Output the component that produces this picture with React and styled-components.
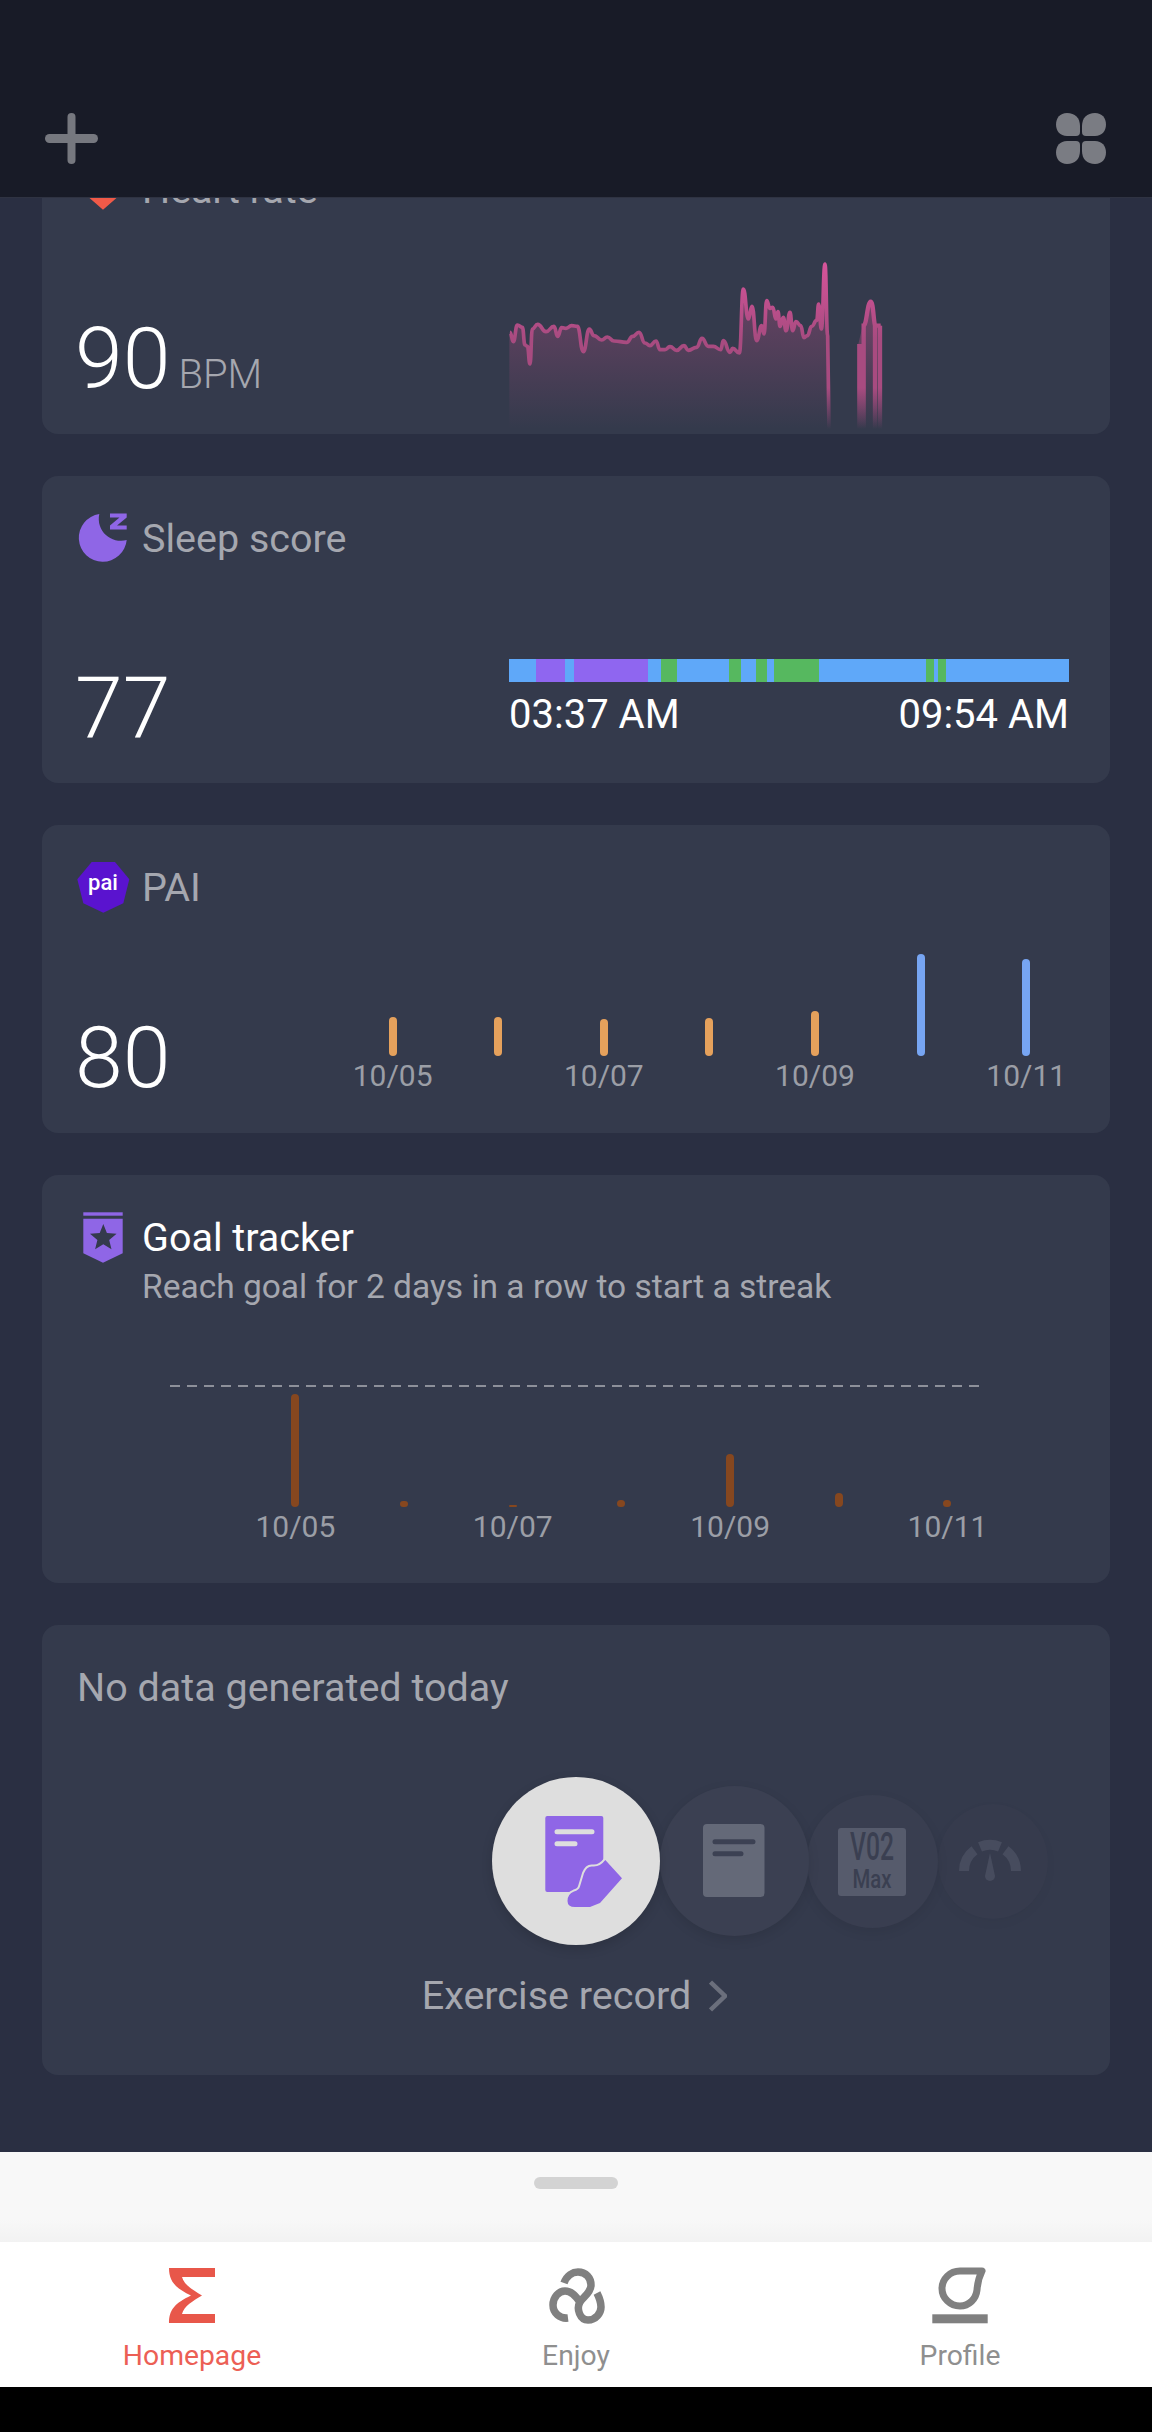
import React from 'react';
import styled, { createGlobalStyle } from 'styled-components';

const Global = createGlobalStyle`
  html, body { margin: 0; padding: 0; background: #000; }
  * { box-sizing: border-box; }
  body { font-family: Roboto, "Noto Sans", sans-serif; }
`;

const Page = styled.div`
  width: 1152px; height: 2432px; display: flex; flex-direction: column; overflow: hidden;
  background: #2a2f42;
`;
const Header = styled.header`
  flex: none; height: 198px; background: #181b27; padding: 113px 45px 0;
  display: flex; justify-content: space-between; align-items: flex-start;
  border-bottom: 1px solid #2f3342;
`;
const HeaderIcon = styled.svg`width: 53px; height: 51px; display: block;`;
const Scroller = styled.main`flex: none; height: 1954px; overflow: hidden; padding: 0 42px;`;
const Feed = styled.div`margin-top: -71px; display: flex; flex-direction: column; gap: 42px;`;
const Card = styled.section`
  height: ${p => p.$h}px; background: #343a4c; border-radius: 16px; overflow: hidden;
  padding: 37px 41px 0 35px; display: flex; flex-direction: column;
`;
const TitleRow = styled.div`display: flex; align-items: center; gap: 13px; height: 52px; flex: none;`;
const IconSlot = styled.svg`width: 52px; height: 52px; flex: none; overflow: visible; display: block;`;
const Title = styled.div`
  font-size: 39.5px; line-height: 50px; color: ${p => (p.$strong ? '#fff' : '#a5a7af')}; white-space: nowrap;
`;
const Body = styled.div`flex: 1; display: flex; justify-content: space-between; align-items: flex-end;`;
const ValueWrap = styled.div`display: flex; align-items: baseline; gap: 8px; margin: 0 0 33px -2px;`;
const Value = styled.div`font-size: 86px; line-height: 84px; color: #fff; font-weight: 300;`;
const Unit = styled.div`font-size: 40px; color: #a5a7af; font-weight: 300;`;
const HeartSvg = styled.svg`width: 420px; height: 190px; margin: 0 159px 5px 0; flex: none; display: block;`;

const SleepCol = styled.div`width: 560px; margin-bottom: 46px; flex: none;`;
const SleepBar = styled.div`height: 23px; display: flex; margin-bottom: 11px;`;
const Seg = styled.div`flex: ${p => p.$w} 0 0; background: ${p => p.$c};`;
const Times = styled.div`
  display: flex; justify-content: space-between; color: #fff; font-size: 40px; line-height: 44px;
`;
const BarGrid = styled.div`
  display: grid; grid-template-columns: repeat(7, ${p => p.$step}px); flex: none;
`;
const PaiChart = styled(BarGrid)`margin: 0 -10px 40px 0;`;
const Col = styled.div`display: flex; flex-direction: column; align-items: center; justify-content: flex-end;`;
const Bar = styled.div`
  width: 8px; height: ${p => p.$h}px; background: ${p => p.$c}; border-radius: ${p => (p.$h < 4 ? 1 : 4)}px;
`;
const DayLabel = styled.div`
  height: 34px; margin-top: 3px; font-size: 30px; line-height: 34px; color: #9b9ea6; white-space: nowrap;
`;
const GoalHead = styled.div`display: flex; gap: 13px;`;
const GoalText = styled.div`display: flex; flex-direction: column; padding-top: 1px;`;
const Sub = styled.div`font-size: 33.5px; line-height: 48px; color: #a5a7af; white-space: nowrap;`;
const GoalChart = styled.div`margin: 74px 0 0 93px;`;
const Dash = styled.div`
  width: 815px; height: 2px;
  background: repeating-linear-gradient(90deg, #8d909a 0 10px, transparent 10px 17px);
`;
const GoalBars = styled(BarGrid)`margin-left: 71px; height: 157px; align-items: end;`;

const Carousel = styled.div`display: flex; align-items: center; margin: 63px 0 0 415px;`;
const Bubble = styled.div`
  flex: none; width: ${p => p.$w}px; height: ${p => p.$ht}px; border-radius: 50%; background: ${p => p.$bg};
  box-shadow: 0 4px 12px rgba(0, 0, 0, ${p => p.$sh}); margin-right: ${p => p.$mr || 0}px;
  position: relative; z-index: ${p => p.$z};
`;
const BubbleIcon = styled.svg`width: 100%; height: 100%; display: block;`;
const More = styled.div`
  margin: 26px 0 0 3px; display: flex; justify-content: center; align-items: center; gap: 18px;
  font-size: 39.5px; line-height: 50px; color: #a5a7af;
`;
const Chevron = styled.svg`width: 18px; height: 32px; display: block;`;

const Sheet = styled.div`
  flex: none; height: 90px; padding-top: 25px; display: flex; justify-content: center; align-items: flex-start;
  background: linear-gradient(180deg, #f8f8f8 75%, #f2f2f2 100%);
`;
const Handle = styled.div`width: 84px; height: 12px; border-radius: 6px; background: #d3d3d3;`;
const Nav = styled.nav`
  flex: none; height: 145px; background: #fff; display: grid; grid-template-columns: repeat(3, 384px); padding-top: 13px;
`;
const Tab = styled.div`
  display: flex; flex-direction: column; align-items: center; color: ${p => (p.$active ? '#ec5f55' : '#8f8f8f')};
`;
const TabIcon = styled.svg`width: 90px; height: 80px; display: block;`;
const TabLabel = styled.div`font-size: 28.3px; line-height: 42px;`;
const Black = styled.div`flex: 1; background: #000;`;

const seg = [
  [39, '#5fa8f9'], [43, '#8f66f0'], [13, '#5fa8f9'], [107, '#8f66f0'], [18, '#5fa8f9'], [24, '#56b85f'],
  [75, '#5fa8f9'], [18, '#56b85f'], [22, '#5fa8f9'], [15, '#56b85f'], [10, '#5fa8f9'], [66, '#56b85f'],
  [155, '#5fa8f9'], [12, '#56b85f'], [6, '#5fa8f9'], [11, '#56b85f'], [179, '#5fa8f9'],
];
const pai = [39, 39, 37, 38, 45, 102, 97];
const goal = [113, 6, 2, 7, 53, 14, 7];
const days = ['10/05', '', '10/07', '', '10/09', '', '10/11'];

const linePts = [[60,280],[70,308],[82,258],[97,265],[105,318],[112,322],[120,375],[127,270],[143,256],[168,278],[192,262],[203,292],[215,266],[228,268],[245,260],[262,262],[280,338],[298,270],[312,290],[335,303],[352,294],[372,306],[410,310],[428,292],[447,280],[465,312],[480,320],[498,306],[510,332],[525,332],[540,323],[560,334],[582,320],[595,334],[620,325],[636,298],[655,322],[670,322],[692,332],[700,305],[720,340],[728,328],[748,342],[760,150],[775,240],[786,202],[800,305],[815,260],[822,285],[830,185],[840,208],[848,205],[858,240],[864,218],[870,262],[880,235],[888,275],[900,220],[908,275],[918,248],[932,260],[942,296],[952,290],[965,262],[980,244],[986,195],[994,270],[1005,75],[1013,290]];
const smooth = pts => {
  let d = `M${pts[0][0]} ${pts[0][1]}`;
  for (let i = 1; i < pts.length; i++) {
    const [x0, y0] = pts[i - 1];
    const [x1, y1] = pts[i];
    const m = (x0 + x1) / 2;
    d += ` C${m} ${y0} ${m} ${y1} ${x1} ${y1}`;
  }
  return d;
};
const lineD = smooth(linePts);

const starPts = (() => {
  const out = [];
  for (let i = 0; i < 10; i++) {
    const r = i % 2 ? 6.2 : 14;
    const a = -Math.PI / 2 + (i * Math.PI) / 5;
    out.push(`${(26.3 + r * Math.cos(a)).toFixed(1)},${(26 + r * Math.sin(a)).toFixed(1)}`);
  }
  return out.join(' ');
})();

const petal = 'M12 0C20 0 25 5 25 13V19Q25 23 21 23H12C5 23 1 18 1 11.500C1 5 5 0 12 0Z';

export default function App() {
  return (
    <Page>
      <Global />
      <Header>
        <HeaderIcon viewBox="0 0 53 51">
          <rect x="22.500" y="0" width="8" height="51" rx="4" fill="#76787f" />
          <rect x="0" y="21" width="53" height="9" rx="4.500" fill="#76787f" />
        </HeaderIcon>
        <HeaderIcon viewBox="0 0 53 51">
          <g fill="#7a7c83" transform="translate(1 0)">
            <path d={petal} />
            <path d={petal} transform="translate(52 0) scale(-1 1)" />
            <path d={petal} transform="translate(0 51) scale(1 -1)" />
            <path d={petal} transform="translate(52 51) scale(-1 -1)" />
          </g>
        </HeaderIcon>
      </Header>
      <Scroller>
        <Feed>
          <Card $h={307}>
            <TitleRow>
              <IconSlot viewBox="0 0 52 52">
                <path fill="#f05a48" d="M26 45.700L1 24C-3 12 8 3 18 6C22 7 25 10 26 12C27 10 30 7 34 6C44 3 55 12 51 24Z" />
              </IconSlot>
              <Title>Heart rate</Title>
            </TitleRow>
            <Body>
              <ValueWrap>
                <Value>90</Value>
                <Unit>BPM</Unit>
              </ValueWrap>
              <HeartSvg viewBox="0 0 420 190">
                <defs>
                  <linearGradient id="hrFill" x1="0" y1="0" x2="0" y2="1" gradientUnits="objectBoundingBox">
                    <stop offset="0" stopColor="#c9528f" stopOpacity=".42" />
                    <stop offset="1" stopColor="#c9528f" stopOpacity="0" />
                  </linearGradient>
                  <linearGradient id="hrLine" x1="0" y1="75" x2="0" y2="570" gradientUnits="userSpaceOnUse">
                    <stop offset="0" stopColor="#d6549a" />
                    <stop offset=".45" stopColor="#a84b80" />
                    <stop offset=".75" stopColor="#a84b80" />
                    <stop offset="1" stopColor="#a84b80" stopOpacity="0" />
                  </linearGradient>
                </defs>
                <g transform="scale(.33333)">
                  <path fill="url(#hrFill)" d={`${lineD} L1017 570 H58 V280 Z`} />
                  <path fill="none" stroke="url(#hrLine)" strokeWidth="11" strokeLinejoin="round" d={`${lineD} L1017 570`} />
                  <path fill="url(#hrFill)" d="M1105 570V315L1118 260L1142 188L1150 260H1175V570Z" />
                  <path fill="none" stroke="url(#hrLine)" strokeWidth="13" d="M1108 570V315M1121 570V260C1130 260 1132 188 1142 188C1150 188 1150 240 1155 260V570M1170 260V570M1155 260H1172" />
                </g>
              </HeartSvg>
            </Body>
          </Card>

          <Card $h={307}>
            <TitleRow>
              <IconSlot viewBox="0 0 52 52">
                <path fill="#8f66e6" d="M22.300 1A24 24 0 1 0 49.700 27A22 22 0 0 1 22.300 1Z" />
                <path fill="#8f66e6" d="M33 .5H49.700V4.500L40 12.500H49.700V16.500H33V12.500L42.500 4.500H33Z" />
              </IconSlot>
              <Title>Sleep score</Title>
            </TitleRow>
            <Body>
              <ValueWrap><Value>77</Value></ValueWrap>
              <SleepCol>
                <SleepBar>
                  {seg.map(([w, c], i) => <Seg key={i} $w={w} $c={c} />)}
                </SleepBar>
                <Times><span>03:37 AM</span><span>09:54 AM</span></Times>
              </SleepCol>
            </Body>
          </Card>

          <Card $h={308}>
            <TitleRow>
              <IconSlot viewBox="0 0 52 52">
                <polygon fill="#5a13cf" points="14.700,0 38,0 52.300,17.300 46.300,41.300 26.300,50.700 6.300,41.300 .3,17.300" />
                <text x="26" y="28" textAnchor="middle" fill="#fff" fontFamily="Roboto, sans-serif" fontWeight="500" fontSize="22">pai</text>
              </IconSlot>
              <Title>PAI</Title>
            </TitleRow>
            <Body>
              <ValueWrap><Value>80</Value></ValueWrap>
              <PaiChart $step={105.6}>
                {pai.map((h, i) => (
                  <Col key={i}>
                    <Bar $h={h} $c={i > 4 ? '#77a5f2' : '#e5a15c'} />
                    <DayLabel>{days[i]}</DayLabel>
                  </Col>
                ))}
              </PaiChart>
            </Body>
          </Card>

          <Card $h={408}>
            <GoalHead>
              <IconSlot viewBox="0 0 52 52">
                <rect x="6.300" y=".3" width="39.400" height="3.400" fill="#8f66e6" />
                <path fill="#8f66e6" d="M6.300 6.700H45.700V41.300L26 50.700L6.300 41.300Z" />
                <polygon fill="#343a4d" points={starPts} />
              </IconSlot>
              <GoalText>
                <Title $strong>Goal tracker</Title>
                <Sub>Reach goal for 2 days in a row to start a streak</Sub>
              </GoalText>
            </GoalHead>
            <GoalChart>
              <Dash />
              <GoalBars $step={108.7}>
                {goal.map((h, i) => (
                  <Col key={i}>
                    <Bar $h={h} $c="#86471f" />
                    <DayLabel>{days[i]}</DayLabel>
                  </Col>
                ))}
              </GoalBars>
            </GoalChart>
          </Card>

          <Card $h={450}>
            <TitleRow><Title>No data generated today</Title></TitleRow>
            <Carousel>
              <Bubble $w={168} $ht={168} $bg="#dedede" $sh=".14" $z={4}>
                <BubbleIcon viewBox="0 0 168 168">
                  <rect x="53.300" y="39" width="58" height="76" rx="2" fill="#8f66e6" />
                  <path stroke="#dedede" strokeWidth="5" strokeLinecap="round" d="M65 54.700H100M65 66.700H83" />
                  <path fill="#8f66e6" stroke="#dedede" strokeWidth="4" paintOrder="stroke" d="M113.300 83L130 101.300L108 126L98 130H83Q75.500 130 75.500 124Q75.500 117 82 114.500Q87 113 88 109.500L92 96.300Q95 88.500 101 89.500Q108 90 113.300 83Z" />
                </BubbleIcon>
              </Bubble>
              <Bubble $w={149} $ht={150} $bg="#3b4052" $sh=".1" $mr={-2} $z={3}>
                <BubbleIcon viewBox="0 0 149 150">
                  <rect x="43" y="38" width="61.500" height="73" rx="4" fill="#646978" />
                  <path stroke="#3c4153" strokeWidth="5" strokeLinecap="round" d="M55 55.700H93M55 67.700H81" />
                </BubbleIcon>
              </Bubble>
              <Bubble $w={131} $ht={133} $bg="#393e50" $sh=".08" $z={2}>
                <BubbleIcon viewBox="0 0 131 133">
                  <rect x="31" y="33" width="68" height="68" rx="3" fill="#565b6c" />
                  <text x="43" y="65" fill="#3a3f51" fontFamily="Roboto, sans-serif" fontWeight="500" fontSize="38" textLength="44" lengthAdjust="spacingAndGlyphs">V02</text>
                  <text x="45.500" y="93" fill="#3a3f51" fontFamily="Roboto, sans-serif" fontWeight="500" fontSize="25" textLength="39" lengthAdjust="spacingAndGlyphs">Max</text>
                </BubbleIcon>
              </Bubble>
              <Bubble $w={110} $ht={115} $bg="#363b4d" $sh=".03" $z={1}>
                <BubbleIcon viewBox="0 0 110 115">
                  <g fill="none" stroke="#474c5e" strokeWidth="10">
                    <path d="M26 67A26 26 0 0 1 36.500 46.200" />
                    <path d="M42 42.900A26 26 0 0 1 62 42.900" />
                    <path d="M67.500 46.200A26 26 0 0 1 78 67" />
                  </g>
                  <path fill="#474c5e" d="M52 49L47 72A5 5 0 1 0 57 72Z" />
                </BubbleIcon>
              </Bubble>
            </Carousel>
            <More>
              <span>Exercise record</span>
              <Chevron viewBox="0 0 18 32">
                <path d="M1.500 2L16 16L1.500 30" fill="none" stroke="#6b6f7c" strokeWidth="4.500" />
              </Chevron>
            </More>
          </Card>
        </Feed>
      </Scroller>
      <Sheet><Handle /></Sheet>
      <Nav>
        <Tab $active>
          <TabIcon viewBox="0 0 90 80">
            <path fill="#e8574a" d="M22 13H68V22H35C37 30 46 35 55 40.500C46 46 37 51 35 59H68V68H22C22 55 28 48 44 40.500C28 33 22 26 22 13Z" />
          </TabIcon>
          <TabLabel>Homepage</TabLabel>
        </Tab>
        <Tab>
          <TabIcon viewBox="0 0 90 80">
            <g fill="none" stroke="#808080" strokeWidth="7.500">
              <path d="M33 28C36 20 42 17 47 17C55 17 60 23 60 30C60 38 52 42 49 47C45 54 49 65 57 65C65 65 70 58 70 52C70 46 68 42 66 38" />
              <path d="M37 63C29 64 22 58 22 50C22 42 28 36 34 36C40 36 44 40 49 47" />
            </g>
          </TabIcon>
          <TabLabel>Enjoy</TabLabel>
        </Tab>
        <Tab>
          <TabIcon viewBox="0 0 90 80">
            <path fill="none" stroke="#808080" strokeWidth="7" strokeLinejoin="round" d="M67 16H45C35 16 27 24 27 33.500C27 43 35 51 45 51C54 51 61 44 62 35C62.500 28 64 22 67 16Z" />
            <rect x="17.300" y="59.300" width="55.400" height="9" fill="#808080" />
          </TabIcon>
          <TabLabel>Profile</TabLabel>
        </Tab>
      </Nav>
      <Black />
    </Page>
  );
}
